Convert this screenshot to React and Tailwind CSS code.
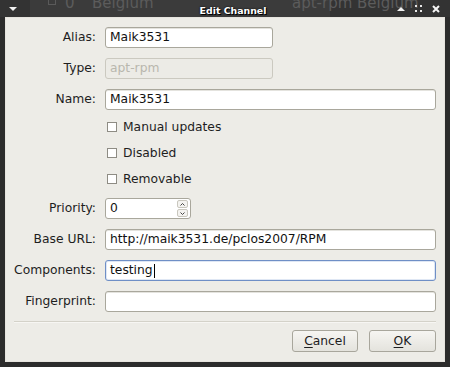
import React from "react";

const font = { fontFamily: '"DejaVu Sans", "Liberation Sans", sans-serif' };

function Label({ children }) {
  return (
    <div className="flex h-[21px] items-center justify-end text-[12.3px] text-[#1e1e1e]">
      {children}
    </div>
  );
}

function Input({ value, focused, disabled, cursor }) {
  const base =
    "flex h-[21px] items-center rounded-[3px] border pl-[4px] text-[12.3px] ";
  const look = disabled
    ? "border-[#cbc9c0] bg-[#ecebe6] text-[#b9b7ae]"
    : focused
    ? "border-[#6f8fc6] bg-white text-[#111] shadow-[inset_0_0_0_1px_#dfe7f4]"
    : "border-[#a9a79c] bg-white text-[#111] shadow-[inset_0_1px_0_#e4e3de]";
  return (
    <div className={base + look}>
      <span>{value}</span>
      {cursor && <span className="ml-[1px] inline-block h-[14px] w-[1px] bg-black" />}
    </div>
  );
}

function Check({ label }) {
  return (
    <div className="flex h-[26px] items-center pl-[2px]">
      <span className="mr-[6px] inline-block h-[10px] w-[10px] border border-[#8e8c84] bg-white" />
      <span className="text-[12.3px] text-[#1e1e1e]">{label}</span>
    </div>
  );
}

export default function App() {
  return (
    <div
      className="flex h-[367px] w-[450px] flex-col overflow-hidden bg-[#2c2c2c]"
      style={font}
    >
      {/* title bar */}
      <div className="relative flex h-[17px] shrink-0 items-center bg-[#333333]">
        <div className="absolute left-[30px] top-0 h-[17px] w-[300px] bg-[#3b3b3b]" />
        <div className="absolute left-[48px] top-[-8px] h-[13px] w-[8px] border border-[#5a5a5a]" />
        <div className="absolute left-[65px] top-[-8px] text-[15px] text-[#5c5c5c]">0</div>
        <div className="absolute left-[92px] top-[-8px] text-[15px] text-[#5c5c5c]">Belgium</div>
        <div className="absolute left-[292px] top-[-8px] text-[15px] text-[#5c5c5c]">apt-rpm</div>
        <div className="absolute left-[357px] top-[-8px] text-[15px] text-[#5c5c5c]">Belgium</div>
        <div className="relative flex w-full items-center px-[9px]">
          <svg width="8" height="6" viewBox="0 0 8 6" className="mt-[1px]">
            <path d="M0 1 H8 L4 5 Z" fill="#f2f2f2" />
          </svg>
          <div className="flex-1 pl-[52px] text-center">
            <span
              className="text-[9.4px] font-bold text-white"
              style={{ textShadow: "0 0 2px #000, 1px 1px 0 #000" }}
            >
              Edit Channel
            </span>
          </div>
          <div className="flex items-center gap-[10px] pr-[1px]">
            <svg width="8" height="6" viewBox="0 0 8 6">
              <path d="M0 5 H8 L4 1 Z" fill="#f2f2f2" />
            </svg>
            <svg width="7" height="7" viewBox="0 0 7 7">
              <rect x="0" y="0" width="2" height="2" fill="#e8e8e8" />
              <rect x="5" y="0" width="2" height="2" fill="#e8e8e8" />
              <rect x="0" y="5" width="2" height="2" fill="#e8e8e8" />
              <rect x="5" y="5" width="2" height="2" fill="#e8e8e8" />
            </svg>
            <svg width="8" height="8" viewBox="0 0 8 8">
              <path d="M1 1 L7 7 M7 1 L1 7" stroke="#f5f5f5" strokeWidth="2" />
            </svg>
          </div>
        </div>
      </div>

      {/* body */}
      <div className="mx-[5px] mb-[5px] flex flex-1 flex-col border border-[#e6e4de] bg-[#edece7] pt-[9px] pb-[9px]">
        <div className="grid grid-cols-[90px_1fr] gap-x-[9px] pr-[8px]">
          <Label>Alias:</Label>
          <div className="w-[168px]">
            <Input value="Maik3531" />
          </div>
          <div className="col-span-2 h-[10px]" />
          <Label>Type:</Label>
          <div className="w-[168px]">
            <Input value="apt-rpm" disabled />
          </div>
          <div className="col-span-2 h-[10px]" />
          <Label>Name:</Label>
          <Input value="Maik3531" />
          <div className="col-span-2 h-[4px]" />
          <div />
          <div className="flex flex-col">
            <Check label="Manual updates" />
            <Check label="Disabled" />
            <Check label="Removable" />
          </div>
          <div className="col-span-2 h-[6px]" />
          <Label>Priority:</Label>
          <div className="flex h-[21px] w-[86px] items-center rounded-[3px] border border-[#a9a79c] bg-white pl-[4px] text-[12.3px] text-[#111]">
            <span className="flex-1">0</span>
            <div className="flex h-full w-[14px] flex-col items-center justify-center gap-[1px] pr-[1px]">
              <div className="flex h-[8px] w-[11px] items-center justify-center rounded-[2px] border border-[#c9c7be] bg-[#f4f3f0]">
                <svg width="5" height="3" viewBox="0 0 5 3">
                  <path d="M0.5 2.5 L2.5 0.5 L4.5 2.5" stroke="#444" fill="none" strokeWidth="1" />
                </svg>
              </div>
              <div className="flex h-[8px] w-[11px] items-center justify-center rounded-[2px] border border-[#c9c7be] bg-[#f4f3f0]">
                <svg width="5" height="3" viewBox="0 0 5 3">
                  <path d="M0.5 0.5 L2.5 2.5 L4.5 0.5" stroke="#444" fill="none" strokeWidth="1" />
                </svg>
              </div>
            </div>
          </div>
          <div className="col-span-2 h-[10px]" />
          <Label>Base URL:</Label>
          <Input value="http://maik3531.de/pclos2007/RPM" />
          <div className="col-span-2 h-[10px]" />
          <Label>Components:</Label>
          <Input value="testing" focused cursor />
          <div className="col-span-2 h-[10px]" />
          <Label>Fingerprint:</Label>
          <Input value="" />
        </div>

        <div className="ml-[8px] mr-[8px] mt-[9px] border-t border-b border-t-[#d4d2c9] border-b-[#f7f6f3]" />

        <div className="mt-[7px] flex justify-end gap-[11px] pr-[8px]">
          <button className="flex h-[22px] w-[66px] items-center justify-center rounded-[3px] border border-[#a8a69c] bg-gradient-to-b from-[#f6f5f2] to-[#e4e3dd] text-[12.3px] text-[#1e1e1e]">
            <span>
              <span className="underline underline-offset-2">C</span>ancel
            </span>
          </button>
          <button className="flex h-[22px] w-[67px] items-center justify-center rounded-[3px] border border-[#a8a69c] bg-gradient-to-b from-[#f6f5f2] to-[#e4e3dd] text-[12.3px] text-[#1e1e1e]">
            <span>
              <span className="underline underline-offset-2">O</span>K
            </span>
          </button>
        </div>
      </div>
    </div>
  );
}
